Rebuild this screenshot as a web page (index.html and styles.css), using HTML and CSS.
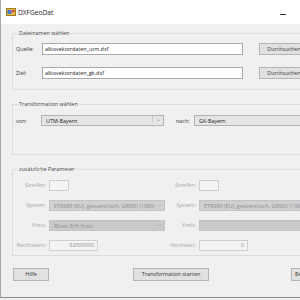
FILE: index.html
```html
<!DOCTYPE html>
<html>
<head>
<meta charset="utf-8">
<link rel="stylesheet" href="styles.css">
</head>
<body>
<div class="window">
  <div class="titlebar">
    <svg class="appicon" width="10" height="10" viewBox="0 0 10 10">
      <rect x="0.5" y="1.5" width="9" height="7" fill="#e8b84a" stroke="#a07a20" stroke-width="1"/>
      <rect x="1.5" y="3" width="4" height="4" fill="#4a78c8"/>
      <rect x="6" y="3" width="2.5" height="2" fill="#d04040"/>
    </svg>
    <span class="title">DXFGeoDat</span>
    <span class="minimize"></span>
  </div>
  <div class="client">
    <fieldset class="group g1">
      <legend>Dateinamen wählen</legend>
      <div class="filerow">
        <span class="lbl">Quelle:</span>
        <span class="textbox">alkisvektordaten_utm.dxf</span>
        <span class="button browse">Durchsuchen</span>
      </div>
      <div class="filerow">
        <span class="lbl">Ziel:</span>
        <span class="textbox">alkisvektordaten_gk.dxf</span>
        <span class="button browse">Durchsuchen</span>
      </div>
    </fieldset>
    <fieldset class="group g2">
      <legend>Transformation wählen</legend>
      <div class="transrow">
        <span class="lbl von">von:</span>
        <span class="combo active c-von"><span class="ctext">UTM-Bayern</span><span class="arrow">&#8964;</span></span>
        <span class="lbl nach">nach:</span>
        <span class="combo active c-nach"><span class="ctext">GK-Bayern</span></span>
      </div>
    </fieldset>
    <fieldset class="group g3">
      <legend>zusätzliche Parameter</legend>
      <div class="params">
        <span class="plbl">Streifen:</span>
        <span><span class="dbox streifen"></span></span>
        <span class="plbl">Streifen:</span>
        <span><span class="dbox streifen"></span></span>

        <span class="plbl">System:</span>
        <span class="combo dis sys"><span class="ctext">ETRS89 (EU), geozentrisch, GRS80 (1980)</span><span class="arrow">&#8964;</span></span>
        <span class="plbl">System:</span>
        <span class="combo dis sys wide"><span class="ctext">ETRS89 (EU), geozentrisch, GRS80 (1980)</span></span>

        <span class="plbl">Kreis:</span>
        <span class="combo dis kreis"><span class="ctext">Rhein-Erft-Kreis</span><span class="arrow">&#8964;</span></span>
        <span class="plbl">Kreis:</span>
        <span class="combo dis kreis wide"><span class="ctext"></span></span>

        <span class="plbl">Rechtswert:</span>
        <span><span class="dbox num">-32000000</span></span>
        <span class="plbl">Hochwert:</span>
        <span><span class="dbox num">0</span></span>
      </div>
    </fieldset>
    <div class="buttons">
      <span class="button hilfe">Hilfe</span>
      <span class="button start">Transformation starten</span>
      <span class="button beenden">Beenden</span>
    </div>
  </div>
</div>
</body>
</html>
```
FILE: styles.css
```css
html, body {
  margin: 0;
  padding: 0;
  width: 300px;
  height: 300px;
  overflow: hidden;
  background: #f0f0f0;
}
body {
  font-family: "Open Sans", "Noto Sans", sans-serif;
  font-size: 5.4px;
  color: #333;
}
.window {
  width: 300px;
  height: 298px;
  box-sizing: border-box;
  border-left: 1px solid #a8a8a8;
  border-bottom: 1px solid #8a8a8a;
  background: #f0f0f0;
  overflow: hidden;
}
.titlebar {
  height: 24px;
  background: #ffffff;
  display: flex;
  align-items: center;
  padding-left: 5px;
}
.appicon { flex: none; }
.title {
  margin-left: 2px;
  font-size: 6.6px;
  color: #222;
}
.minimize {
  margin-left: auto;
  margin-right: 14px;
  margin-top: 4px;
  width: 6px;
  height: 1px;
  background: #333;
}
.client {
  padding: 5px 0 0 11px;
}
.group {
  margin: 0;
  padding: 0 0 0 3px;
  border: 1px solid #dcdcdc;
  width: 320px;
  min-width: 0;
}
.group legend {
  padding: 0 1px;
  margin-left: 2px;
  line-height: 8px;
  height: 8px;
  color: #444;
}
.g1 { padding-top: 6px; padding-bottom: 10px; }
.filerow {
  display: flex;
  align-items: center;
  height: 12px;
}
.filerow + .filerow { margin-top: 12px; }
.lbl { width: 26px; flex: none; }
.textbox {
  box-sizing: border-box;
  width: 201px;
  height: 12px;
  line-height: 10px;
  background: #fff;
  border: 1px solid #a8a8a8;
  padding-left: 2px;
  color: #222;
  flex: none;
}
.button {
  box-sizing: border-box;
  height: 12px;
  line-height: 10px;
  background: #e1e1e1;
  border: 1px solid #b4b4b4;
  text-align: center;
  color: #333;
  flex: none;
  white-space: nowrap;
}
.browse { width: 50px; margin-left: 16px; }

.g2 { margin-top: 10px; padding-top: 7px; padding-bottom: 28px; }
.transrow {
  display: flex;
  align-items: center;
  height: 11px;
}
.von { width: 25px; }
.nach { width: 18px; margin-left: 12px; }
.combo {
  box-sizing: border-box;
  height: 11px;
  display: flex;
  align-items: center;
  border: 1px solid #b4b4b4;
  flex: none;
  overflow: hidden;
  white-space: nowrap;
}
.combo.active { background: #e5e5e5; color: #222; }
.ctext { padding-left: 4px; flex: 1; }
.arrow {
  width: 10px;
  text-align: center;
  color: #888;
  font-size: 6px;
  line-height: 6px;
  margin-top: -3px;
  border-left: 1px solid #c8c8c8;
}
.c-von { width: 123px; }
.c-nach { width: 110px; }

.g3 { margin-top: 10px; padding-top: 7px; padding-bottom: 4px; }
.params {
  display: grid;
  grid-template-columns: 30px 116px 28px 120px;
  column-gap: 3px;
  row-gap: 9px;
  align-items: center;
}
.plbl {
  text-align: right;
  color: #a6a6a6;
  white-space: nowrap;
  height: 11px;
  line-height: 11px;
}
.dbox {
  display: block;
  box-sizing: border-box;
  height: 11px;
  line-height: 9px;
  background: #f4f4f4;
  border: 1px solid #cfcfcf;
  color: #8a8a8a;
}
.streifen { width: 20px; }
.num { width: 49px; text-align: right; padding-right: 3px; }
.combo.dis {
  background: #d0d0d0;
  border-color: #c4c4c4;
  color: #8e8e8e;
}
.combo.dis .arrow { border-left: none; color: #b0b0b0; }
.combo.kreis { background: #cacaca; }
.sys, .kreis { width: 116px; }
.wide { width: 120px; }

.buttons {
  display: flex;
  align-items: center;
  margin-top: 12px;
  margin-left: 1px;
}
.hilfe { width: 36px; height: 13px; line-height: 11px; }
.start { width: 76px; height: 13px; line-height: 11px; margin-left: 84px; }
.beenden { width: 40px; height: 13px; line-height: 11px; margin-left: 82px; text-align: left; padding-left: 3px; }
```
